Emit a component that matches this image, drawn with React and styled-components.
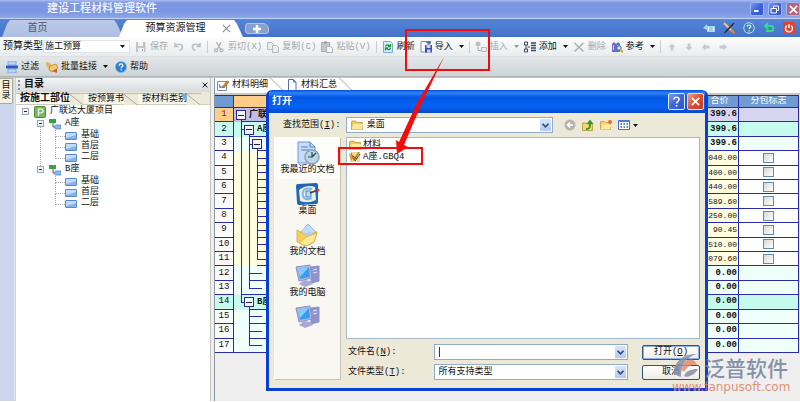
import React, { useState } from 'react'

import styled, { createGlobalStyle, css } from 'styled-components'

const GlobalStyle = createGlobalStyle`
  * {
    box-sizing: border-box;
  }

  body {
    margin: 0;
    background: #fff;
    font-family: "Liberation Mono", "Noto Sans CJK SC", monospace;
    font-size: 9px;
    line-height: 12px;
    color: #111;
  }

  button, input, select {
    font: inherit;
    color: inherit;
    margin: 0;
    padding: 0;
  }

  ul {
    list-style: none;
    margin: 0;
    padding: 0;
  }
`

const Shell = styled.div`
  position: relative;
  display: flex;
  flex-direction: column;
  min-height: calc(100vh - 1px);
  overflow: hidden;
  background: #efefef;
`

const TitleBar = styled.header`
  display: flex;
  align-items: center;
  justify-content: space-between;
  height: 19px;
  padding: 0 0 0 47px;
  background: linear-gradient(#a9bdf0, #7b96e2 3px, #7c98e4 12px, #88a8ec);
  border-bottom: 1px solid #c3d2ee;
`

const AppTitle = styled.h1`
  margin: 0;
  font-size: 11px;
  font-weight: 500;
  line-height: 16px;
  color: #f4f7ff;
`

const Row = styled.div`
  display: flex;
  align-items: center;
  gap: ${props => props.$gap || 0}px;
`

const CaptionButton = styled.button`
  display: flex;
  align-items: center;
  justify-content: center;
  width: ${props => props.$size || 14}px;
  height: ${props => props.$size || 14}px;
  border: 1px solid ${props => props.$edge || '#9fb6f2'};
  border-radius: 2px;
  background: ${props => props.$danger
		? 'linear-gradient(135deg, #f0a088, #dc5030 50%, #c23a1c)'
		: 'linear-gradient(135deg, #7f9cf0, #3d64dc 50%, #2f55cc)'};
  ${props => props.$muted && css`
    background: #b3667f;
  `}
`

const PageTabs = styled.nav`
  display: flex;
  align-items: flex-end;
  height: 18px;
  padding-left: 2px;
  background: linear-gradient(#5485d8, #4472c8);
`

const PageTab = styled.div`
  display: flex;
  align-items: center;
  justify-content: center;
  gap: 16px;
  width: ${props => props.$active ? 124 : 121}px;
  height: 17px;
  margin-right: ${props => props.$active ? 0 : -4}px;
  padding: ${props => props.$active ? '0 10px 0 24px' : '0 50px 0 0'};
  font-size: 10px;
  color: ${props => props.$active ? '#111' : '#5b5564'};
  background: ${props => props.$active ? '#fff' : 'linear-gradient(#bccae8, #aebfe2)'};
  clip-path: polygon(0 100%, 5px 4px, 8px 0, calc(100% - 9px) 0, calc(100% - 6px) 4px, 100% 100%);
`

const TabLink = styled.a`
  color: inherit;
  text-decoration: none;
`

const PlainButton = styled.button`
  display: flex;
  align-items: center;
  gap: 3px;
  border: 0;
  background: none;
  white-space: nowrap;
  color: ${props => props.disabled ? '#a6a9ac' : 'inherit'};
  svg {
    flex: none;
  }
`

const NewTab = styled.button`
  display: flex;
  align-items: center;
  justify-content: center;
  width: 24px;
  height: 11px;
  margin: 0 0 3px 2px;
  border: 1px solid #b7c6e2;
  border-radius: 3px 6px 3px 3px;
  background: #86a0cf;
`

const PageTools = styled.div`
  display: flex;
  align-items: center;
  gap: 8px;
  height: 18px;
  margin-left: auto;
  padding-right: 5px;
`

const Toolbar = styled.div`
  display: flex;
  align-items: center;
  gap: ${props => props.$lower ? 7 : 5}px;
  height: 20px;
  padding-left: ${props => props.$lower ? 6 : 3}px;
  overflow: hidden;
  background: ${props => props.$lower
		? 'linear-gradient(#e3e7ea, #ccd4d6)'
		: 'linear-gradient(#fdfdfd, #e9ecef)'};
  border-bottom: 1px solid ${props => props.$lower ? '#aeb4b6' : '#dde1e4'};
`

const FieldLabel = styled.label`
  flex: none;
  font-size: ${props => props.$size || 9}px;
  white-space: nowrap;
`

const Divider = styled.span`
  flex: none;
  width: 1px;
  height: 12px;
  background: #c9cdd1;
`

const Combo = styled.div`
  display: flex;
  align-items: center;
  flex: ${props => props.$width ? 'none' : 1};
  width: ${props => props.$width ? props.$width + 'px' : 'auto'};
  height: ${props => props.$plain ? 13 : 16}px;
  padding: ${props => props.$plain ? '0 1px' : '0 1px 0 4px'};
  gap: 4px;
  background: #fff;
  border: 1px solid ${props => props.$plain ? '#dfe3e6' : '#8fadc6'};
`

const BareSelect = styled.select`
  flex: 1;
  min-width: 0;
  height: 12px;
  border: 0;
  outline: 0;
  background: none;
  appearance: none;
`

const BareInput = styled.input`
  flex: 1;
  min-width: 0;
  height: 10px;
  border: 0;
  outline: 0;
  border-left: 1px solid #333;
  background: none;
`

const ComboArrow = styled.span`
  display: flex;
  align-items: center;
  justify-content: center;
  width: 11px;
  height: 12px;
  background: ${props => props.$plain ? 'none' : 'linear-gradient(#d9e4fd, #b4c8f6)'};
  pointer-events: none;
`

const Workspace = styled.div`
  display: flex;
  flex: 1;
  border-top: 1px solid #c4c4c0;
`

const SideStrip = styled.div`
  width: 15px;
  background: #ccd5ec;
  border-right: 1px solid #dfe4f2;
`

const SideTab = styled.button`
  width: 13px;
  height: 26px;
  border: 1px solid #a9a998;
  border-left: 0;
  border-radius: 0 2px 2px 0;
  background: #f5f2e2;
  font-size: 9px;
  line-height: 10px;
`

const Directory = styled.aside`
  width: 196px;
  background: #fff;
  border-left: 1px solid #d4d4d0;
  border-right: 1px solid #c6c3b8;
`

const PanelHead = styled.div`
  display: flex;
  align-items: center;
  justify-content: space-between;
  height: 14px;
  padding: 0 2px 0 2px;
  background: linear-gradient(#f4f5f6, #d5dadc);
`

const PanelTitle = styled.h2`
  margin: 0;
  padding-left: 4px;
  border-left: 2px dotted #8b8f92;
  font-size: 10px;
  line-height: 10px;
`

const DirTabs = styled.div`
  display: flex;
  align-items: flex-end;
  height: 13px;
  background: #ece9d8;
  border-bottom: 1px solid #cfccbc;
`

const DirTab = styled.button`
  display: flex;
  align-items: center;
  height: 11px;
  padding: 0 0 0 4px;
  border: 0;
  border-top: 1px solid #bdbaa8;
  background: ${props => props.$active ? '#fff' : '#f7f5ec'};
  font-size: ${props => props.$active ? 10 : 9}px;
  font-weight: ${props => props.$active ? 700 : 400};
  line-height: 10px;
  white-space: nowrap;
  svg {
    flex: none;
    background: #ece9d8;
  }
`

const Tree = styled.ul`
  && {
    padding: 1px 0 0 6px;
  }

  ul {
    margin-top: 1px;
    padding-left: 15px;
  }
`

const Branch = styled.li`
  position: relative;

  & + & {
    margin-top: 1px;
  }

  &:not(:last-child)::before {
    content: "";
    position: absolute;
    left: 3px;
    top: 9px;
    bottom: -3px;
    border-left: 1px dotted #aaa;
  }
`

const Leaf = styled.li`
  position: relative;
  padding-left: 13px;

  &::before {
    content: "";
    position: absolute;
    left: 3px;
    top: -5px;
    width: 9px;
    height: 11px;
    border-left: 1px dotted #aaa;
    border-bottom: 1px dotted #aaa;
  }
`

const Node = styled.div`
  display: flex;
  align-items: center;
  gap: 4px;
  height: 11px;
  line-height: 11px;
`

const Toggle = styled.button`
  display: flex;
  align-items: center;
  justify-content: center;
  flex: none;
  width: ${props => props.$grid ? 10 : 7}px;
  height: ${props => props.$grid ? 10 : 7}px;
  margin-right: ${props => props.$grid ? 3 : 1}px;
  border: 1px solid ${props => props.$grid ? '#2a2a8c' : '#9aa6b8'};
  background: #f4f4f8;

  &::before {
    content: "";
    width: ${props => props.$grid ? 6 : 3}px;
    height: 1px;
    background: #223;
  }
`

const Sheet = styled.main`
  flex: 1;
  min-width: 0;
  margin-left: 3px;
  border-left: 1px solid #8a98a8;
`

const SheetTabs = styled.div`
  display: flex;
  align-items: center;
  gap: 2px;
  height: 17px;
  padding: 0 0 3px 2px;
  background: #fff;
  border-bottom: 2px solid #c8c8c4;
`

const SheetTab = styled.button`
  display: flex;
  align-items: center;
  gap: 3px;
  height: 14px;
  border: 0;
  border-top: 1px solid #c8c5b8;
  background: none;
  svg {
    flex: none;
  }
`

const navy = '#2a2aa8'

const Table = styled.table`
  width: calc(100% - 1px);
  height: 258px;
  table-layout: fixed;
  border-collapse: separate;
  border-spacing: 0;
  font-size: 9px;
  line-height: 11px;

  th, td {
    padding: 0;
    overflow: hidden;
    white-space: nowrap;
    border-right: 1px solid ${navy};
    border-bottom: 1px solid ${navy};
  }
`

const HeadCell = styled.th`
  background: ${props => props.$picked ? '#ffcd87' : '#6f9bd2'};
  border-top: 1px solid ${navy};
  color: #fff;
  font-weight: 400;
`

const NumberCell = styled.th`
  background: ${props => props.$bg};
  color: ${props => props.$picked ? '#8c1c50' : '#111'};
  font-size: 9px;
  font-weight: 400;
`

const line = (x, y, w, h) => `linear-gradient(${navy}, ${navy}) ${x} ${y} / ${w} ${h} no-repeat`

// vertical guides, the stub towards the item and the bottom rule share one background
const guides = ({ $lines, $stub, $rule, $bg }) => [
	...$lines.map(([x, part]) => line(x + 'px', part === 'lower' ? '100%' : '0', '1px', part ? '50%' : '100%')),
	...($stub ? [line($stub[0] + 'px', '50%', $stub[1] + 'px', '1px')] : []),
	line($rule + 'px', '100%', '100%', '1px'),
	$bg
].join(', ')

const NameCell = styled.td`
  && {
    border-bottom: 0;
    padding-left: ${props => props.$indent}px;
  }
  background: ${guides};
  font-weight: 700;
`

const ValueCell = styled.td`
  && {
    padding-right: 1px;
  }
  background: ${props => props.$bg};
  font-size: ${props => props.$bold ? 9 : 8}px;
  font-weight: ${props => props.$bold ? 700 : 400};
  text-align: right;
`

const Check = styled.input`
  display: block;
  width: 11px;
  height: 10px;
  && {
    margin: 0 auto;
  }
  appearance: none;
  border: 1px solid #5c8cb4;
  background: linear-gradient(135deg, #d8d8d4, #fff);

  &:checked {
    background: #5c8cb4;
  }
`

const Dialog = styled.section`
  position: absolute;
  left: 266px;
  top: 90px;
  width: 442px;
  border: 3px solid #0a3fd6;
  border-top: 0;
  border-radius: 6px 6px 0 0;
  background: #ece9d8;
  overflow: hidden;
`

const DialogTitle = styled.div`
  display: flex;
  align-items: center;
  justify-content: space-between;
  height: 23px;
  padding: 0 1px 0 3px;
  background: linear-gradient(#0a50d8, #2c84fa 3px, #0558e4 7px, #0562f2 17px, #0448c8);

  h2 {
    margin: 0;
    font-size: 10px;
    color: #fff;
  }
`

const DialogBody = styled.div`
  display: grid;
  grid-template-columns: 67px 1fr;
  gap: 4px 5px;
  padding: 4px 5px 8px;
`

const LookIn = styled.div`
  grid-column: 1 / -1;
  display: flex;
  align-items: center;
  gap: 5px;
  padding-left: 9px;
`

const LookTools = styled.div`
  display: flex;
  align-items: center;
  gap: 6px;
  padding: 0 62px 0 6px;
`

const Places = styled.ul`
  background: #f8f7f2;
  border: 1px solid #fff;
  border-bottom-color: #c5c2b2;
  border-right-color: #c5c2b2;
`

const Place = styled.button`
  display: flex;
  flex-direction: column;
  align-items: center;
  width: 100%;
  height: 41px;
  padding-top: 3px;
  border: 0;
  background: ${props => props.$active ? '#fdfdfb' : 'none'};
  line-height: 10px;
  white-space: nowrap;
`

const FilePane = styled.div`
  display: flex;
  flex-direction: column;
  gap: 4px;
`

const FileList = styled.ul`
  height: 202px;
  && {
    padding: 1px 2px;
    margin-bottom: 1px;
  }
  background: #fff;
  border: 1px solid #a3b9c9;
`

const FileItem = styled.li`
  display: flex;
  align-items: center;
  gap: 2px;
  height: 12px;
`

const FormRow = styled.div`
  display: grid;
  grid-template-columns: 71px 194px 58px;
  justify-content: space-between;
  align-items: center;
  padding-left: 2px;
`

const PushButton = styled.button`
  height: 15px;
  border: 1px solid #32527c;
  border-radius: 2px;
  background: linear-gradient(#fff, #eeece4);
  box-shadow: ${props => props.$primary ? 'inset 0 0 0 1px #8fb0ea' : 'none'};
`

const Marks = styled.div`
  position: absolute;
  inset: 0;
  pointer-events: none;
  overflow: hidden;
`

const MarkBox = styled.div`
  position: absolute;
  left: ${props => props.$x}px;
  top: ${props => props.$y}px;
  width: 85px;
  height: ${props => props.$h}px;
  border: 2px solid #f40c0c;
`

const MarkArrow = styled.svg`
  position: absolute;
  left: 390px;
  top: 56px;
`

const Brand = styled.div`
  position: absolute;
  right: 10px;
  bottom: 8px;
  width: 118px;
  opacity: 0.85;
`

const BrandName = styled.div`
  display: flex;
  align-items: center;
  gap: 4px;
  height: 26px;
  padding-bottom: 3px;
  font-family: "Noto Sans CJK SC", sans-serif;
  font-size: 21px;
  line-height: 22px;
  font-weight: 500;
  color: #74819c;
  white-space: nowrap;
`

const BrandSite = styled.div`
  font-family: "DejaVu Sans", sans-serif;
  font-size: 12px;
  line-height: 12px;
  color: #dd835f;
`

const Caret = ({ muted }) => (
	<svg width="5" height="3" viewBox="0 0 5 3"><path d="M0 0h5L2.5 3z" fill={ muted ? '#999' : '#111' }/></svg>
)

const Chevron = () => (
	<svg width="7" height="5" viewBox="0 0 7 5"><path d="M.5.8l3 3 3-3" fill="none" stroke="#31507f" strokeWidth="1.7"/></svg>
)

const Cross = ({ size = 8, color = '#333', weight = 1.3 }) => (
	<svg width={ size } height={ size } viewBox="0 0 8 8"><path d="M.8.8l6.4 6.4M7.2.8L.8 7.2" stroke={ color } strokeWidth={ weight }/></svg>
)

const drawings = {
	save: <><path d="M1 1h9.5v10H1z" fill="#c2c5c8"/><path d="M3 1h5v4H3zM3 7h6v4H3z" fill="#f1f2f3"/><path d="M7 8h1v2H7z" fill="#999"/></>,
	undo: <path d="M2 2v3.5h3.5M2.5 5C4.5 2.5 9.5 2.5 9.5 6c0 2-1.500 3-3 3.500" fill="none" stroke="#bcc0c4" strokeWidth="1.600"/>,
	redo: <path d="M10 2v3.500H6.500M9.500 5C7.500 2.500 2.500 2.500 2.500 6c0 2 1.500 3 3 3.500" fill="none" stroke="#bcc0c4" strokeWidth="1.600"/>,
	cut: <g fill="none" stroke="#aeb2b6" strokeWidth="1.200"><path d="M3.500 1l4 7M8 1L4.500 8"/><circle cx="3" cy="9.300" r="1.500"/><circle cx="8.500" cy="9.300" r="1.500"/></g>,
	copy: <g fill="#eceef0" stroke="#b5b8bc"><path d="M.5 1.500h4l2 2v5h-6z"/><path d="M5.500 4.500h4l2 2v5h-6z"/></g>,
	paste: <><path d="M.5 1.500h8v9h-8z" fill="#c4c7ca" stroke="#a9acb0"/><path d="M3 .5h3v2H3z" fill="#999"/><path d="M5.500 5.500h4l2 2v4h-6z" fill="#f2f3f4" stroke="#a9acb0"/></>,
	refresh: <><path d="M1.500.5h7l2 2v9h-9z" fill="#d8ebfb" stroke="#7aaad8"/><path d="M3.500 5.500c.5-2 3-2 4-.5M8.500 3v2.500H6M8.500 7c-.5 2-3 2-4 .5M3.500 9.500V7H6" fill="none" stroke="#1f9a35" strokeWidth="1.300"/></>,
	import: <><path d="M1 .5h5l2 2V11H1z" fill="#fff" stroke="#7a90c4"/><path d="M5 4h7v7.500H5z" fill="#3d4fb4"/><path d="M6.500 4h4v3h-4zM7 8.500h3.500v3H7z" fill="#c9d0f2"/><path d="M5 0h6v2l-2 2-2-2z" fill="#4f74c8"/></>,
	insert: <><circle cx="3" cy="3" r="2.500" fill="#bcbfc2"/><path d="M3 6v3.500h3" fill="none" stroke="#aaa"/><path d="M6.500 6.500h5v4h-5z" fill="#eee" stroke="#b4b7ba"/></>,
	add: <g fill="#fff" stroke="#3a4660"><path d="M.5 1h3v3h-3zM.5 8h3v3h-3zM2 4v4M3.500 6H6"/><path d="M7 2h5M7 4.500h5M7 7h5M7 9.500h5" strokeWidth="1.300"/></g>,
	remove: <path d="M1.500 2l9 8.500M10.500 2l-9 8.500" stroke="#acb0b4" strokeWidth="1.500"/>,
	consult: <><path d="M1 3l2-2 2 2v8H1z" fill="#7468c4"/><path d="M5 3l2-2 2 2v8H5z" fill="#4d78cc"/><path d="M2 4h1v5H2zM6 4h1v5H6z" fill="#c9d6f6"/><circle cx="8" cy="7" r="2.200" fill="#d4ecfb" stroke="#48659a"/><path d="M9.500 8.500l2.500 3" stroke="#e0a020" strokeWidth="1.800"/></>,
	filter: <><path d="M2 0h8v4H2zM2 8h8v4H2z" fill="#bcd2f6" stroke="#6d92d8" strokeWidth=".7"/><path d="M0 4.500h12v3H0z" fill="#2c5cc0"/></>,
	link: <><path d="M0 1l4 1 2 3-3 3-3-4z" fill="#e8b25a"/><path d="M4 5l6-2 2 4-6 4-3-2z" fill="#f3c86a" stroke="#b07a28" strokeWidth=".7"/><path d="M6 10l5 2v-4" fill="#cf5a38"/></>,
	help: <><circle cx="6" cy="6" r="5.600" fill="#2f7fc8" stroke="#8fbce4" strokeWidth=".8"/><path d="M4.200 4.700c0-2.500 3.700-2.300 3.700-.2 0 1.300-1.800 1.300-1.800 2.700M6.100 8.300v1.200" fill="none" stroke="#fff" strokeWidth="1.200"/></>,
	up: <path d="M6 2.500L9.500 6H7.500v3.500h-3V6h-2z" fill="#c6c9cd"/>,
	down: <path d="M6 9.500L9.500 6H7.500V2.500h-3V6h-2z" fill="#c6c9cd"/>,
	left: <path d="M2 6l3.500-3.500v2H9.500v3h-4v2z" fill="#c6c9cd"/>,
	right: <path d="M10 6L6.500 2.500v2h-4v3h4v2z" fill="#c6c9cd"/>,
	note: <><path d="M0 6l4-4v2h8v6H4V8z" fill="#9fd8f4"/><path d="M5 5h6v4H5z" fill="#e4f5fc"/><path d="M6 6h4M6 8h4" stroke="#4e96c4" strokeWidth=".8"/></>,
	tools: <><path d="M1 1l9 9" stroke="#e8c98c" strokeWidth="2"/><path d="M11 1l-9.500 10" stroke="#2c2c30" strokeWidth="1.500"/><path d="M8 8l3.500 3.500" stroke="#d98a30" strokeWidth="2"/></>,
	ask: <><circle cx="6" cy="6" r="5.200" fill="#3c7eb8" stroke="#c4e0f2"/><path d="M4.300 4.800c0-2.400 3.500-2.200 3.500-.2 0 1.200-1.700 1.200-1.700 2.500M6.100 8.200v1.200" fill="none" stroke="#fff" strokeWidth="1.100"/></>,
	back: <path d="M2.500 4h5.500c3 0 3 5 0 5H3M5 1L2 4l3 3" fill="none" stroke="#35dc86" strokeWidth="2"/>,
	power: <><rect width="12" height="12" rx="1.500" fill="#e2432c"/><path d="M4 3.500a3.500 3.500 0 1 0 4 0M6 2v4" fill="none" stroke="#fff" strokeWidth="1.400"/></>,
	project: <><rect x=".5" y=".5" width="11" height="11" rx="1" fill="#76b95e" stroke="#4c8c3c"/><path d="M4.500 10V3h2.500a1.800 1.800 0 0 1 0 4H4.500" fill="none" stroke="#fff" strokeWidth="1.200"/></>,
	building: <><path d="M4 5v4h3" fill="none" stroke="#555"/><rect x="0" y="1" width="7" height="4" fill="#3aa046"/><rect x="6" y="7" width="6" height="4" fill="#8fb8ee" stroke="#4a78c0" strokeWidth=".7"/></>,
	floor: <><rect x=".5" y="2.500" width="11" height="7" rx=".5" fill="#86b2f2" stroke="#5a88cc"/><path d="M1 3h10v2L1 8z" fill="#c4dcfb"/></>,
	detail: <><path d="M.5 2.500h9v9h-9z" fill="#fff" stroke="#7a8ca8"/><path d="M2 5l2 4M2 8h5" stroke="#4f78b8"/><path d="M5 8l5-6 2 1-5 6z" fill="#d88a30" stroke="#744010" strokeWidth=".5"/></>,
	sheet: <path d="M2.500.5h5l2.500 2.500v8.500H2.500zM7.500.5V3H10" fill="#fbfdff" stroke="#5872a8"/>,
	folder: <><path d="M.5 3V10.500h11V3.500H6l-1-1.500H1z" fill="#f3ca58" stroke="#c29434" strokeWidth=".8"/><path d="M2.500 5H12l-1 5.500H.8z" fill="#ffe9a0"/></>,
	gbq: <><path d="M2 1h9v10H2z" fill="#f0dc9c"/><path d="M0 2l4 5-2 4" fill="#e09a28"/><path d="M2 2l3 7 5-8" fill="none" stroke="#b07020" strokeWidth="1.400"/><path d="M6 10l5-7M4 5l4 3" stroke="#54421c"/></>,
	prev: <><circle cx="6" cy="6" r="5.500" fill="#b5b5b0"/><path d="M9 6H4M6 3.500L3.500 6 6 8.500" fill="none" stroke="#fff" strokeWidth="1.500"/></>,
	parent: <><path d="M.5 4h4l1 1h5v6.500H.5z" fill="#f5d56c" stroke="#b89034" strokeWidth=".8"/><path d="M4 10c4 0 4-2 4-5" fill="none" stroke="#2f9a30" strokeWidth="2"/><path d="M4.500 5L8 .5 11.500 5z" fill="#2f9a30"/></>,
	newFolder: <><path d="M.5 2.500h4l1 1h5v7H.5z" fill="#f8d468" stroke="#c89c3c" strokeWidth=".8"/><path d="M2.500 5.500h9l-1.500 5H.8z" fill="#ffe9a0"/><circle cx="10" cy="3" r="2" fill="#ee6a38"/></>,
	view: <><path d="M.5 1.500h11v9H.5z" fill="#fff" stroke="#3f74c8"/><path d="M.5 1.500h11v1.500H.5z" fill="#4c86dc"/><path d="M2.500 5h1.500M5.500 5H7M8.500 5H10M2.500 8h1.500M5.500 8H7M8.500 8H10" stroke="#367" strokeWidth="1.500"/></>
}

const Icon = ({ name, size = 12 }) => (
	<svg width={ size } height={ size } viewBox="0 0 12 12" aria-hidden="true">{ drawings[name] }</svg>
)

const placeDrawings = {
	recent: <><path d="M3 1h12l5 5v16H3z" fill="#c6dcf8" stroke="#6c98d4"/><path d="M15 1v5h5M6 6h7M6 9h9" fill="none" stroke="#5482c4"/><circle cx="17" cy="16" r="7" fill="#b8d8ea" stroke="#8fa2b0" strokeWidth="1.500"/><path d="M17 11v5h-4M17 16l4-4" fill="none" stroke="#345" strokeWidth="1.200"/></>,
	desktop: <><path d="M1 4q0-2 2-2l18-1q2 0 2 2v17q0 2-2 2L4 23q-2 0-2-2z" fill="#1f65bc"/><path d="M4 8q8-6 16-3l1 13q-8 4-16 1z" fill="#eef0d6"/><path d="M17 7C9 5 7 9 8 14c1 4 6 4 9 2" fill="none" stroke="#7db4ea" strokeWidth="2"/><path d="M11 9h5v6h-5z" fill="#b6dcf5" stroke="#4a86be"/><path d="M15 11l8-3" stroke="#3a3a60" strokeWidth="1.500"/><circle cx="23" cy="8" r="1.500" fill="#d83c28"/></>,
	documents: <><path d="M5 10l8-9 8 8-9 12z" fill="#c2dcf8" stroke="#9bbce0"/><path d="M2 7l9 5 11-3-3 10-8 4-9-4z" fill="#f5cf58" stroke="#d4aa44" strokeWidth=".8"/><path d="M10 11l4-3 4 3-4 6z" fill="#aed0f4"/><path d="M4 20l7-6 11-4-3 9-8 4z" fill="#ffe998" stroke="#d4aa44" strokeWidth=".8"/></>,
	computer: <><path d="M16 3l8-1v15l-8 2z" fill="#8f94ca" stroke="#8a8fc4"/><path d="M18 6l4-1M18 9l4-1" stroke="#e4e6f8"/><path d="M1 3l14-2 2 13-13 3z" fill="#b4b8e4" stroke="#8a8fc4"/><path d="M3 5l11-2 1 10-10 2z" fill="#3c9cec"/><path d="M3 5l11-2-9 10z" fill="#86ccfa"/><path d="M4 20l5-4 7 1 2 3-8 3z" fill="#a5a9d4"/></>
}

const directory = [
	{ name: 'A座', floors: ['基础', '首层', '二层'] },
	{ name: 'B座', floors: ['基础', '首层', '二层'] }
]

const mint = '#effffa'
const aqua = '#c6fbee'
const cream = '#fffde0'

const item = (value, last) => ({
	value, bg: cream, check: true, rule: 23,
	lines: [[7], [15], last ? [23, 'upper'] : [23]], stub: [23, 100]
})

const rows = [
	{ name: '广联达大厦项目', value: '399.6', bg: '#d6d4f0', nameBg: '#bdbde8', indent: 2, lines: [[7, 'lower']], rule: 7 },
	{ name: 'A座', value: '399.6', bg: aqua, indent: 10, lines: [[7], [15, 'lower']], stub: [7, 4], rule: 15 },
	{ name: '', value: '399.6', bg: mint, indent: 18, toggle: true, lines: [[7], [15], [23, 'lower']], stub: [15, 4], rule: 23 },
	item('040.00'),
	item('400.00'),
	item('440.00'),
	item('589.60'),
	item('250.00'),
	item('90.45'),
	item('510.00'),
	item('079.60', true),
	{ value: '0.00', bg: mint, lines: [[7], [15]], stub: [15, 13], rule: 15 },
	{ value: '0.00', bg: mint, lines: [[7], [15, 'upper']], stub: [15, 13], rule: 7 },
	{ name: 'B座', value: '0.00', bg: aqua, indent: 10, lines: [[7, 'upper'], [15, 'lower']], stub: [7, 4], rule: 15 },
	{ value: '0.00', bg: mint, lines: [[15]], stub: [15, 13], rule: 15 },
	{ value: '0.00', bg: mint, lines: [[15]], stub: [15, 13], rule: 15 },
	{ value: '0.00', bg: mint, lines: [[15, 'upper']], stub: [15, 13], rule: 0 }
]

const numberBg = index => {
	if (index === 0)
		return '#ffcd87'

	return index === 1 || index === 13 ? aqua : '#fbfbfc'
}

const Tool = ({ icon, label, caret, disabled }) => (
	<Row $gap={ 6 }>
		<PlainButton disabled={ disabled } aria-label={ label || icon }>
			<Icon name={ icon }/>
			{ label }
		</PlainButton>
		{ caret && <Caret muted={ disabled }/> }
	</Row>
)

const Slant = ({ width = 14, height = 11 }) => (
	<svg width={ width } height={ height } viewBox={ `0 0 ${ width } ${ height }` }>
		<path d={ `M0 .5l${ width } ${ height }` } fill="none" stroke="#a9a696"/>
	</svg>
)

const DirectoryPanel = () => {
	const [tab, setTab] = useState('按施工部位')

	return (
		<Directory>
			<PanelHead>
				<PanelTitle>目录</PanelTitle>
				<PlainButton aria-label="关闭"><Cross size={ 6 } color="#111"/></PlainButton>
			</PanelHead>
			<DirTabs>
				{ ['按施工部位', '按预算书', '按材料类别'].map(name => (
					<DirTab key={ name } $active={ name === tab } onClick={ () => setTab(name) }>
						{ name }<Slant/>
					</DirTab>
				)) }
			</DirTabs>
			<Tree>
				<li>
					<Node><Toggle aria-label="折叠"/><Icon name="project"/>广联达大厦项目</Node>
					<ul>
						{ directory.map(block => (
							<Branch key={ block.name }>
								<Node><Toggle aria-label="折叠"/><Icon name="building"/>{ block.name }</Node>
								<ul>
									{ block.floors.map(floor => (
										<Leaf key={ floor }><Node><Icon name="floor"/>{ floor }</Node></Leaf>
									)) }
								</ul>
							</Branch>
						)) }
					</ul>
				</li>
			</Tree>
		</Directory>
	)
}

const MaterialTable = () => (
	<Table>
		<colgroup>
			<col width="19"/>
			<col/>
			<col width="38"/>
			<col width="60"/>
		</colgroup>
		<thead>
			<tr>
				<HeadCell/>
				<HeadCell $picked/>
				<HeadCell>合价</HeadCell>
				<HeadCell>分包标志</HeadCell>
			</tr>
		</thead>
		<tbody>
			{ rows.map((row, index) => (
				<tr key={ index }>
					<NumberCell $bg={ numberBg(index) } $picked={ index === 0 }>{ index + 1 }</NumberCell>
					<NameCell $bg={ row.nameBg || row.bg } $lines={ row.lines } $stub={ row.stub } $rule={ row.rule } $indent={ row.indent || 0 }>
						{ (row.name || row.toggle) && <Row><Toggle $grid aria-label="折叠"/>{ row.name }</Row> }
					</NameCell>
					<ValueCell $bg={ row.bg } $bold={ !row.check }>{ row.value }</ValueCell>
					<ValueCell $bg={ row.check ? '#fff' : row.bg }>
						{ row.check && <Check type="checkbox" aria-label={ `分包标志 ${ index + 1 }` }/> }
					</ValueCell>
				</tr>
			)) }
		</tbody>
	</Table>
)

const places = [
	['recent', '我最近的文档'],
	['desktop', '桌面'],
	['documents', '我的文档'],
	['computer', '我的电脑'],
	['computer', '']
]

const OpenDialog = () => (
	<Dialog role="dialog" aria-labelledby="open-title">
		<DialogTitle>
			<h2 id="open-title">打开</h2>
			<Row $gap={ 2 }>
				<CaptionButton $size={ 17 } $edge="#dfe8fc" aria-label="帮助">
					<svg width="9" height="11" viewBox="0 0 9 11"><path d="M2 3.500C2 .5 7 .5 7 3.500c0 2-2.500 2-2.500 4M4.500 9v1.500" fill="none" stroke="#fff" strokeWidth="1.600"/></svg>
				</CaptionButton>
				<CaptionButton $size={ 17 } $edge="#f4dcd4" $danger aria-label="关闭"><Cross size={ 9 } color="#fff" weight={ 1.6 }/></CaptionButton>
			</Row>
		</DialogTitle>
		<DialogBody>
			<LookIn>
				<FieldLabel htmlFor="look-in">查找范围(<u>I</u>):</FieldLabel>
				<Combo>
					<Icon name="folder" size={ 12 }/>
					<BareSelect id="look-in"><option>桌面</option></BareSelect>
					<ComboArrow><Chevron/></ComboArrow>
				</Combo>
				<LookTools>
					{ ['prev', 'parent', 'newFolder', 'view'].map(name => (
						<PlainButton key={ name } aria-label={ name }>
							<Icon name={ name }/>
							{ name === 'view' && <Caret/> }
						</PlainButton>
					)) }
				</LookTools>
			</LookIn>
			<Places>
				{ places.map(([icon, label], index) => (
					<li key={ index }>
						<Place $active={ index === 0 } aria-label={ label || icon }>
							<svg width="25" height="24" viewBox="0 0 25 24">{ placeDrawings[icon] }</svg>
							{ label }
						</Place>
					</li>
				)) }
			</Places>
			<FilePane>
				<FileList>
					<FileItem><Icon name="folder"/>材料</FileItem>
					<FileItem><Icon name="gbq"/>A座.GBQ4</FileItem>
				</FileList>
				<FormRow>
					<FieldLabel htmlFor="file-name">文件名(<u>N</u>):</FieldLabel>
					<Combo>
						<BareInput id="file-name"/>
						<ComboArrow><Chevron/></ComboArrow>
					</Combo>
					<PushButton $primary>打开(<u>O</u>)</PushButton>
				</FormRow>
				<FormRow>
					<FieldLabel htmlFor="file-type">文件类型(<u>T</u>):</FieldLabel>
					<Combo>
						<BareSelect id="file-type"><option>所有支持类型</option></BareSelect>
						<ComboArrow><Chevron/></ComboArrow>
					</Combo>
					<PushButton>取消</PushButton>
				</FormRow>
			</FilePane>
		</DialogBody>
	</Dialog>
)

export default function App() {
	return (
		<Shell>
			<GlobalStyle/>
			<TitleBar>
				<AppTitle>建设工程材料管理软件</AppTitle>
				<Row $gap={ 4 }>
					<CaptionButton aria-label="最小化">
						<svg width="8" height="8" viewBox="0 0 8 8"><path d="M1 6h4.500" stroke="#fff" strokeWidth="2"/></svg>
					</CaptionButton>
					<CaptionButton aria-label="还原">
						<svg width="10" height="9" viewBox="0 0 10 9"><path d="M3.500 3V1h5v4.500h-2M1 3.500h5.500V8H1z" fill="none" stroke="#fff"/></svg>
					</CaptionButton>
					<CaptionButton $muted aria-label="关闭"><Cross size={ 9 } color="#fff" weight={ 1.5 }/></CaptionButton>
				</Row>
			</TitleBar>
			<PageTabs>
				<PageTab><TabLink href="#home">首页</TabLink></PageTab>
				<PageTab $active>
					<TabLink href="#resource">预算资源管理</TabLink>
					<PlainButton aria-label="关闭"><Cross size={ 9 } color="#888" weight={ 0.9 }/></PlainButton>
				</PageTab>
				<NewTab aria-label="新建">
					<svg width="8" height="8" viewBox="0 0 8 8"><path d="M4 0v8M0 4h8" stroke="#fff" strokeWidth="2.500"/></svg>
				</NewTab>
				<PageTools>
					{ ['note', 'tools', 'ask', 'back', 'power'].map(name => (
						<PlainButton key={ name } aria-label={ name }><Icon name={ name }/></PlainButton>
					)) }
				</PageTools>
			</PageTabs>
			<Toolbar>
				<Row>
					<FieldLabel $size={ 10 } htmlFor="budget-type">预算类型</FieldLabel>
					<Combo $plain $width={ 87 }>
						<BareSelect id="budget-type"><option>施工预算</option></BareSelect>
						<ComboArrow $plain><Caret/></ComboArrow>
					</Combo>
				</Row>
				<Tool icon="save" label="保存" disabled/>
				<Tool icon="undo" disabled/>
				<Tool icon="redo" disabled/>
				<Divider/>
				<Tool icon="cut" label="剪切(X)" disabled/>
				<Tool icon="copy" label="复制(C)" disabled/>
				<Tool icon="paste" label="粘贴(V)" disabled/>
				<Divider/>
				<Tool icon="refresh" label="刷新"/>
				<Tool icon="import" label="导入" caret/>
				<Divider/>
				<Tool icon="insert" label="插入" caret disabled/>
				<Tool icon="add" label="添加" caret/>
				<Tool icon="remove" label="删除" disabled/>
				<Tool icon="consult" label="参考" caret/>
				<Divider/>
				<Tool icon="up" disabled/>
				<Tool icon="down" disabled/>
				<Tool icon="left" disabled/>
				<Tool icon="right" disabled/>
			</Toolbar>
			<Toolbar $lower>
				<Tool icon="filter" label="过滤"/>
				<Tool icon="link" label="批量挂接" caret/>
				<Tool icon="help" label="帮助"/>
			</Toolbar>
			<Workspace>
				<SideStrip><SideTab>目录</SideTab></SideStrip>
				<DirectoryPanel/>
				<Sheet>
					<SheetTabs>
						<SheetTab><Icon name="detail"/>材料明细</SheetTab>
						<Slant width={ 14 } height={ 14 }/>
						<SheetTab><Icon name="sheet"/>材料汇总</SheetTab>
						<Slant width={ 14 } height={ 14 }/>
					</SheetTabs>
					<MaterialTable/>
				</Sheet>
			</Workspace>
			<OpenDialog/>
			<Marks>
				<MarkBox $x={ 405 } $y={ 29 } $h={ 42 }/>
				<MarkBox $x={ 338 } $y={ 147 } $h={ 18 }/>
				<MarkArrow width="56" height="100" viewBox="0 0 56 100">
					<path d="M54 1L27 47 9 86l-3-2 1 14 11-7-4-2 17-40z" fill="#f40c0c"/>
				</MarkArrow>
				<Brand>
					<BrandName>
						<svg width="28" height="28" viewBox="0 0 28 28">
							<path d="M1 21C3 8 10 1 25 1 15 4 9 10 9 24z" fill="#8490ac"/>
							<path d="M10 17C11 4 23 4 25 12c-6-1-9 1-13 7z" fill="#e58a68"/>
							<path d="M12 23c2-5 6-7 14-7-2 4-6 7-12 8z" fill="#8490ac"/>
						</svg>
						泛普软件
					</BrandName>
					<BrandSite>www.fanpusoft.com</BrandSite>
				</Brand>
			</Marks>
		</Shell>
	)
}
